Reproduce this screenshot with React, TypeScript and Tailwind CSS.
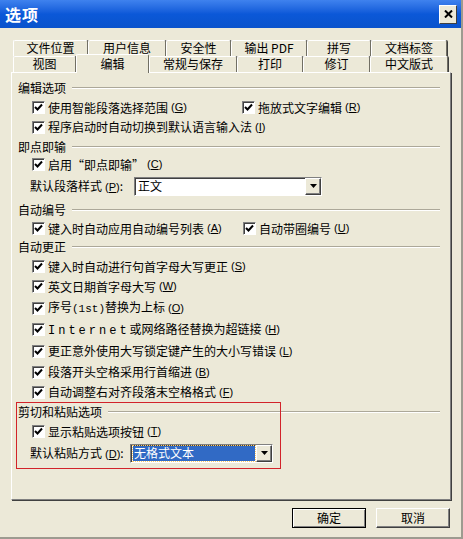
import React from "react";

const font = "font-['Noto_Sans_CJK_SC',sans-serif]";

function Key({ k }: { k: string }) {
	return (
		<span className="ml-[3px] text-[11px] font-['Liberation_Sans',sans-serif]">
			(<span className="underline">{k}</span>)
		</span>
	);
}

function Check() {
	return (
		<span className="w-[13px] h-[13px] shrink-0 bg-white border border-t-[#808080] border-l-[#808080] border-b-white border-r-white shadow-[inset_1px_1px_0_#404040] flex items-center justify-center">
			<svg width="9" height="9" viewBox="0 0 9 9">
				<path d="M1 4 L3.5 6.5 L8 1.5" fill="none" stroke="#000" strokeWidth="2" />
			</svg>
		</span>
	);
}

function CheckRow({ h, label, k, right }: { h: string; label: React.ReactNode; k: string; right?: React.ReactNode }) {
	return (
		<div className={`flex items-center pl-[20px] ${h}`}>
			<div className="flex items-center w-[210px] shrink-0 whitespace-nowrap">
				<Check />
				<span className="ml-[3px]">{label}</span>
				<Key k={k} />
			</div>
			{right}
		</div>
	);
}

function Legend({ h, text }: { h: string; text: string }) {
	return (
		<div className={`flex items-center pl-[6px] pr-[10px] ${h}`}>
			<span>{text}</span>
			<div className="flex-1 ml-[6px] h-[2px] border-t border-t-[#aca899] border-b border-b-white" />
		</div>
	);
}

function Arrow() {
	return (
		<span className="w-[16px] h-full shrink-0 bg-[#ece9d8] border border-t-white border-l-white border-b-[#404040] border-r-[#404040] shadow-[inset_-1px_-1px_0_#808080] flex items-center justify-center">
			<svg width="7" height="4" viewBox="0 0 7 4">
				<path d="M0 0 H7 L3.5 4 Z" fill="#000" />
			</svg>
		</span>
	);
}

function Tab({ w, text, active }: { w: string; text: string; active?: boolean }) {
	if (active)
		return (
			<div className={`${w} h-[19px] -mt-[2px] relative z-10 bg-[#ece9d8] border-t border-l border-t-white border-l-white border-r border-r-[#716f64] rounded-t-[2px] flex justify-center pt-[3px] leading-[12px]`}>
				<span>{text}</span>
			</div>
		);
	return (
		<div className={`${w} h-[16px] bg-[#ece9d8] border-t border-l border-t-white border-l-white border-r border-r-[#716f64] shadow-[1px_0_0_#404040] rounded-t-[2px] flex items-center justify-center pb-[1px] leading-[12px]`}>
			<span>{text}</span>
		</div>
	);
}

export default function App() {
	return (
		<div className={`w-[463px] h-[539px] bg-[#ece9d8] text-[12px] leading-none text-black ${font} flex flex-col border-r-2 border-b-2 border-r-[#9d9b90] border-b-[#9d9b90] overflow-hidden`}>
			<div className="h-[28px] shrink-0 bg-linear-to-b from-[#3f82ee] via-[#0b58d8] to-[#0a53cc] flex items-center justify-between pl-[5px] pr-[4px]">
				<span className="text-white font-bold text-[16px] tracking-[1px]">选项</span>
				<span className="w-[18px] h-[19px] bg-[#ece9d8] border border-t-white border-l-white border-b-[#404040] border-r-[#404040] flex items-center justify-center">
					<svg width="9" height="8" viewBox="0 0 9 8">
						<path d="M1 0.5 L8 7.5 M8 0.5 L1 7.5" stroke="#000" strokeWidth="2" />
					</svg>
				</span>
			</div>

			<div className="mt-[12px] pl-[13px] flex flex-col">
				<div className="flex">
					<Tab w="w-[75px]" text="文件位置" />
					<Tab w="w-[78px]" text="用户信息" />
					<Tab w="w-[65px]" text="安全性" />
					<Tab w="w-[76px]" text="输出 PDF" />
					<Tab w="w-[64px]" text="拼写" />
					<Tab w="w-[76px]" text="文档标签" />
				</div>
				<div className="flex items-start h-[16px]">
					<Tab w="w-[63px]" text="视图" />
					<Tab w="w-[73px]" text="编辑" active />
					<Tab w="w-[88px]" text="常规与保存" />
					<Tab w="w-[66px]" text="打印" />
					<Tab w="w-[67px]" text="修订" />
					<Tab w="w-[78px]" text="中文版式" />
				</div>
			</div>

			<div className="ml-[11px] w-[440px] h-[428px] relative border border-t-white border-l-white border-r-[#808080] border-b-[#808080] shadow-[1px_1px_0_#404040] pt-[5px] flex flex-col">
				<Legend h="h-[20px]" text="编辑选项" />
				<CheckRow
					h="h-[19px]"
					label="使用智能段落选择范围"
					k="G"
					right={
						<div className="flex items-center whitespace-nowrap">
							<Check />
							<span className="ml-[3px]">拖放式文字编辑</span>
							<Key k="R" />
						</div>
					}
				/>
				<CheckRow h="h-[20px]" label="程序启动时自动切换到默认语言输入法" k="I" />
				<Legend h="h-[19px]" text="即点即输" />
				<CheckRow h="h-[17px]" label="启用“即点即输”" k="C" />
				<div className="h-[26px] flex items-center pl-[18px]">
					<span className="w-[104px] shrink-0 whitespace-nowrap">
						默认段落样式<Key k="P" />:
					</span>
					<div className="w-[188px] h-[19px] bg-white border border-t-[#808080] border-l-[#808080] border-b-white border-r-white shadow-[inset_1px_1px_0_#404040] flex items-center pl-[3px]">
						<span className="flex-1">正文</span>
						<Arrow />
					</div>
				</div>
				<Legend h="h-[21px]" text="自动编号" />
				<CheckRow
					h="h-[17px]"
					label="键入时自动应用自动编号列表"
					k="A"
					right={
						<div className="flex items-center whitespace-nowrap ml-[1px]">
							<Check />
							<span className="ml-[3px]">自动带圈编号</span>
							<Key k="U" />
						</div>
					}
				/>
				<Legend h="h-[20px]" text="自动更正" />
				<CheckRow h="h-[19px]" label="键入时自动进行句首字母大写更正" k="S" />
				<CheckRow h="h-[21px]" label="英文日期首字母大写" k="W" />
				<CheckRow
					h="h-[22px]"
					label={
						<>
							序号<span className="font-['Liberation_Mono',monospace] text-[11px]">(1st)</span>替换为上标
						</>
					}
					k="O"
				/>
				<CheckRow
					h="h-[21px]"
					label={
						<>
							<span className="font-['Liberation_Mono',monospace] tracking-[3px]">Internet</span>或网络路径替换为超链接
						</>
					}
					k="H"
				/>
				<CheckRow h="h-[22px]" label="更正意外使用大写锁定键产生的大小写错误" k="L" />
				<CheckRow h="h-[20px]" label="段落开头空格采用行首缩进" k="B" />
				<CheckRow h="h-[20px]" label="自动调整右对齐段落末空格格式" k="F" />
				<Legend h="h-[20px]" text="剪切和粘贴选项" />
				<CheckRow h="h-[19px]" label="显示粘贴选项按钮" k="T" />
				<div className="h-[24px] flex items-center pl-[18px]">
					<span className="w-[100px] shrink-0 whitespace-nowrap">
						默认粘贴方式<Key k="D" />:
					</span>
					<div className="w-[143px] h-[19px] bg-white border border-t-[#808080] border-l-[#808080] border-b-white border-r-white shadow-[inset_1px_1px_0_#404040] flex items-center pl-[2px] pr-0">
						<span className="flex-1 h-[15px] bg-[#316ac5] text-white outline-1 outline-dotted outline-[#ffcc66] flex items-center pl-[1px] mr-[1px]">无格式文本</span>
						<Arrow />
					</div>
				</div>
				<div className="absolute left-[4px] top-[329px] w-[265px] h-[67px] border border-[#d2232a]" />
			</div>

			<div className="mt-[8px] flex justify-end gap-[10px] pr-[11px]">
				<button className="w-[74px] h-[20px] bg-[#ece9d8] border border-black shadow-[inset_1px_1px_0_#fff,inset_-1px_-1px_0_#808080] flex items-center justify-center">
					确定
				</button>
				<button className="w-[74px] h-[20px] bg-[#ece9d8] border border-t-white border-l-white border-b-[#404040] border-r-[#404040] shadow-[inset_-1px_-1px_0_#808080] flex items-center justify-center">
					取消
				</button>
			</div>
		</div>
	);
}
